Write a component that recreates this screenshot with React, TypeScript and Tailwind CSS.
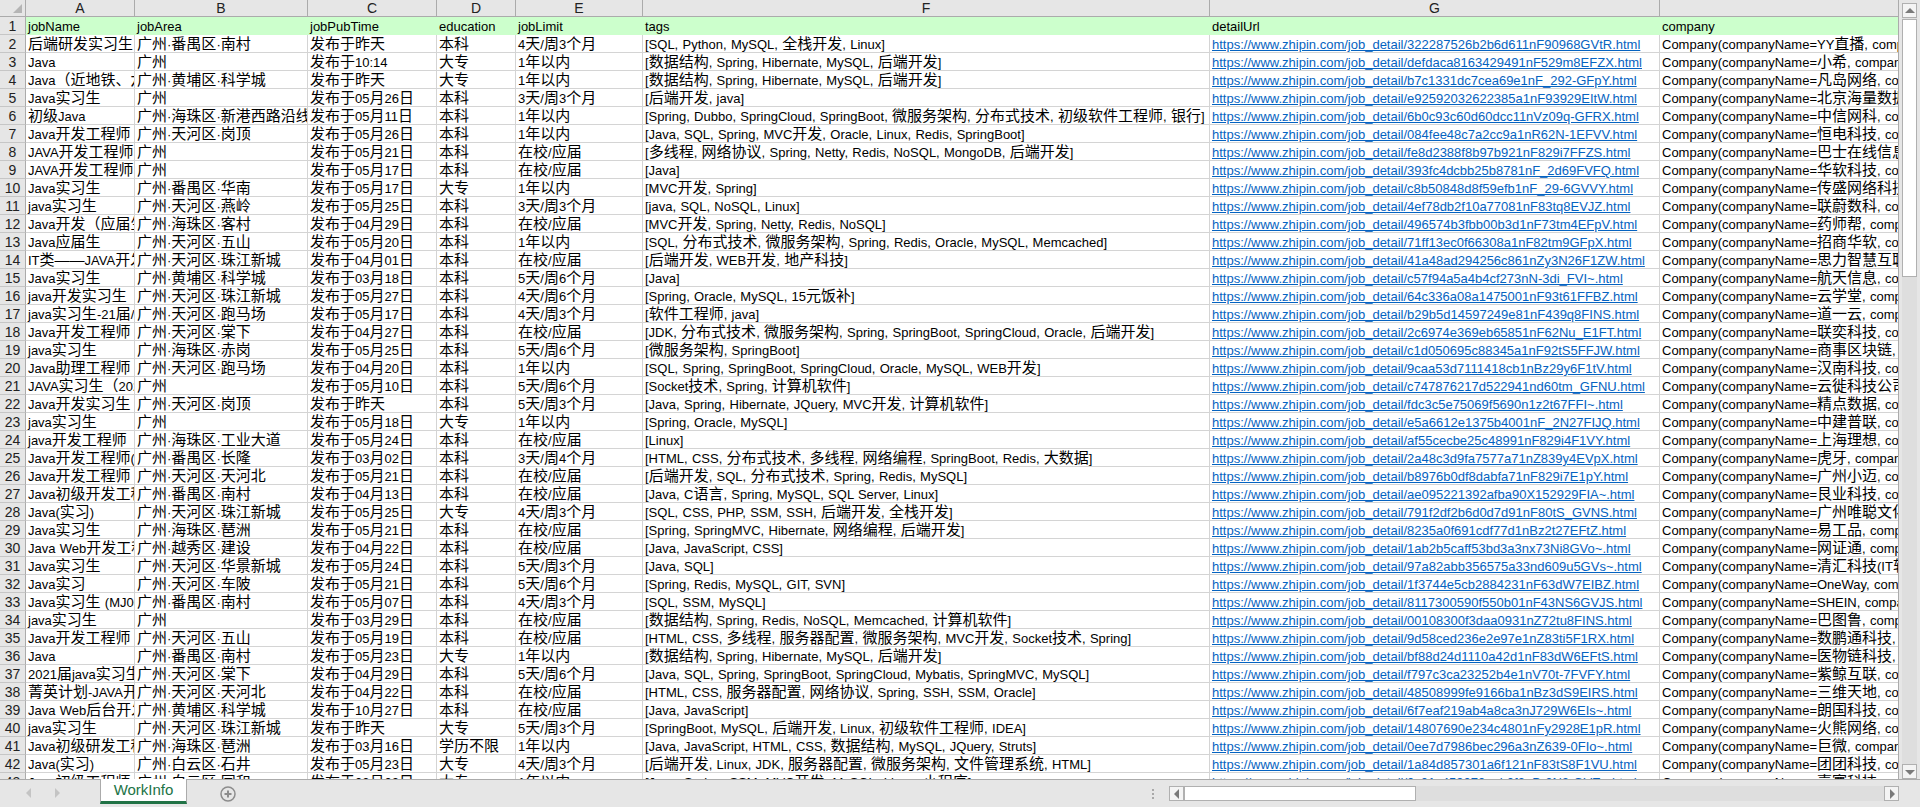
import React from "react";

const columns = [
  { label: "A", width: "w-[109px]" },
  { label: "B", width: "w-[173px]" },
  { label: "C", width: "w-[129px]" },
  { label: "D", width: "w-[79px]" },
  { label: "E", width: "w-[127px]" },
  { label: "F", width: "w-[567px]" },
  { label: "G", width: "w-[450px]" },
  { label: "", width: "w-[240px]" },
];

const widths = columns.map((c) => c.width);

const zp = "https://www.zhipin.com/job_detail/";
const co = "Company(companyName=";

const rows: string[][] = [
  ["后端研发实习生", "广州·番禺区·南村", "发布于昨天", "本科", "4天/周3个月", "[SQL, Python, MySQL, 全栈开发, Linux]", "322287526b2b6d611nF90968GVtR", "YY直播, company"],
  ["Java", "广州", "发布于10:14", "大专", "1年以内", "[数据结构, Spring, Hibernate, MySQL, 后端开发]", "defdaca8163429491nF529m8EFZX", "小希, company"],
  ["Java（近地铁、六", "广州·黄埔区·科学城", "发布于昨天", "大专", "1年以内", "[数据结构, Spring, Hibernate, MySQL, 后端开发]", "b7c1331dc7cea69e1nF_292-GFpY", "凡岛网络, company"],
  ["Java实习生", "广州", "发布于05月26日", "本科", "3天/周3个月", "[后端开发, java]", "e92592032622385a1nF93929EItW", "北京海量数据, company"],
  ["初级Java", "广州·海珠区·新港西路沿线", "发布于05月11日", "本科", "1年以内", "[Spring, Dubbo, SpringCloud, SpringBoot, 微服务架构, 分布式技术, 初级软件工程师, 银行]", "6b0c93c60d60dcc11nVz09q-GFRX", "中信网科, company"],
  ["Java开发工程师", "广州·天河区·岗顶", "发布于05月26日", "本科", "1年以内", "[Java, SQL, Spring, MVC开发, Oracle, Linux, Redis, SpringBoot]", "084fee48c7a2cc9a1nR62N-1EFVV", "恒电科技, company"],
  ["JAVA开发工程师（", "广州", "发布于05月21日", "本科", "在校/应届", "[多线程, 网络协议, Spring, Netty, Redis, NoSQL, MongoDB, 后端开发]", "fe8d2388f8b97b921nF829i7FFZS", "巴士在线信息, company"],
  ["JAVA开发工程师（", "广州", "发布于05月17日", "本科", "在校/应届", "[Java]", "393fc4dcbb25b8781nF_2d69FVFQ", "华软科技, company"],
  ["Java实习生", "广州·番禺区·华南", "发布于05月17日", "大专", "1年以内", "[MVC开发, Spring]", "c8b50848d8f59efb1nF_29-6GVVY", "传盛网络科技, company"],
  ["java实习生", "广州·天河区·燕岭", "发布于05月25日", "本科", "3天/周3个月", "[java, SQL, NoSQL, Linux]", "4ef78db2f10a77081nF83tq8EVJZ", "联蔚数科, company"],
  ["Java开发（应届生", "广州·海珠区·客村", "发布于04月29日", "本科", "在校/应届", "[MVC开发, Spring, Netty, Redis, NoSQL]", "496574b3fbb00b3d1nF73tm4EFpV", "药师帮, company"],
  ["Java应届生", "广州·天河区·五山", "发布于05月20日", "本科", "1年以内", "[SQL, 分布式技术, 微服务架构, Spring, Redis, Oracle, MySQL, Memcached]", "71ff13ec0f66308a1nF82tm9GFpX", "招商华软, company"],
  ["IT类——JAVA开发", "广州·天河区·珠江新城", "发布于04月01日", "本科", "在校/应届", "[后端开发, WEB开发, 地产科技]", "41a48ad294256c861nZy3N26F1ZW", "思力智慧互联, company"],
  ["Java实习生", "广州·黄埔区·科学城", "发布于03月18日", "本科", "5天/周6个月", "[Java]", "c57f94a5a4b4cf273nN-3di_FVI~", "航天信息, company"],
  ["java开发实习生", "广州·天河区·珠江新城", "发布于05月27日", "本科", "4天/周6个月", "[Spring, Oracle, MySQL, 15元饭补]", "64c336a08a1475001nF93t61FFBZ", "云学堂, company"],
  ["java实习生-21届/2", "广州·天河区·跑马场", "发布于05月17日", "本科", "4天/周3个月", "[软件工程师, java]", "b29b5d14597249e81nF439q8FINS", "道一云, company"],
  ["Java开发工程师", "广州·天河区·棠下", "发布于04月27日", "本科", "在校/应届", "[JDK, 分布式技术, 微服务架构, Spring, SpringBoot, SpringCloud, Oracle, 后端开发]", "2c6974e369eb65851nF62Nu_E1FT", "联奕科技, company"],
  ["java实习生", "广州·海珠区·赤岗", "发布于05月25日", "本科", "5天/周6个月", "[微服务架构, SpringBoot]", "c1d050695c88345a1nF92tS5FFJW", "商事区块链, company"],
  ["Java助理工程师", "广州·天河区·跑马场", "发布于04月20日", "本科", "1年以内", "[SQL, Spring, SpringBoot, SpringCloud, Oracle, MySQL, WEB开发]", "9caa53d7111418cb1nBz29y6F1tV", "汉南科技, company"],
  ["JAVA实习生（2021", "广州", "发布于05月10日", "本科", "5天/周6个月", "[Socket技术, Spring, 计算机软件]", "c747876217d522941nd60tm_GFNU", "云徙科技公司, company"],
  ["Java开发实习生", "广州·天河区·岗顶", "发布于昨天", "本科", "5天/周3个月", "[Java, Spring, Hibernate, JQuery, MVC开发, 计算机软件]", "fdc3c5e75069f5690n1z2t67FFI~", "精点数据, company"],
  ["java实习生", "广州", "发布于05月18日", "大专", "1年以内", "[Spring, Oracle, MySQL]", "e5a6612e1375b4001nF_2N27FIJQ", "中建普联, company"],
  ["java开发工程师", "广州·海珠区·工业大道", "发布于05月24日", "本科", "在校/应届", "[Linux]", "af55cecbe25c48991nF829i4F1VY", "上海理想, company"],
  ["Java开发工程师(3", "广州·番禺区·长隆", "发布于03月02日", "本科", "3天/周4个月", "[HTML, CSS, 分布式技术, 多线程, 网络编程, SpringBoot, Redis, 大数据]", "2a48c3d9fa7577a71nZ839y4EVpX", "虎牙, company"],
  ["Java开发工程师", "广州·天河区·天河北", "发布于05月21日", "本科", "在校/应届", "[后端开发, SQL, 分布式技术, Spring, Redis, MySQL]", "b8976b0df8dabfa71nF829i7E1pY", "广州小迈, company"],
  ["Java初级开发工程", "广州·番禺区·南村", "发布于04月13日", "本科", "在校/应届", "[Java, C语言, Spring, MySQL, SQL Server, Linux]", "ae095221392afba90X152929FIA~", "艮业科技, company"],
  ["Java(实习)", "广州·天河区·珠江新城", "发布于05月25日", "大专", "4天/周3个月", "[SQL, CSS, PHP, SSM, SSH, 后端开发, 全栈开发]", "791f2df2b6d0d7d91nF80tS_GVNS", "广州唯聪文化, company"],
  ["Java实习生", "广州·海珠区·琶洲", "发布于05月21日", "本科", "在校/应届", "[Spring, SpringMVC, Hibernate, 网络编程, 后端开发]", "8235a0f691cdf77d1nBz2t27EFtZ", "易工品, company"],
  ["Java Web开发工程", "广州·越秀区·建设", "发布于04月22日", "本科", "在校/应届", "[Java, JavaScript, CSS]", "1ab2b5caff53bd3a3nx73Ni8GVo~", "网证通, company"],
  ["Java实习生", "广州·天河区·华景新城", "发布于05月24日", "本科", "5天/周3个月", "[Java, SQL]", "97a82abb356575a33nd609u5GVs~", "清汇科技(IT软件, company"],
  ["Java实习", "广州·天河区·车陂", "发布于05月21日", "本科", "5天/周6个月", "[Spring, Redis, MySQL, GIT, SVN]", "1f3744e5cb2884231nF63dW7EIBZ", "OneWay, company"],
  ["Java实习生 (MJ00", "广州·番禺区·南村", "发布于05月07日", "本科", "4天/周3个月", "[SQL, SSM, MySQL]", "8117300590f550b01nF43NS6GVJS", "SHEIN, company"],
  ["java实习生", "广州", "发布于03月29日", "本科", "在校/应届", "[数据结构, Spring, Redis, NoSQL, Memcached, 计算机软件]", "00108300f3daa0931nZ72tu8FINS", "巴图鲁, company"],
  ["Java开发工程师", "广州·天河区·五山", "发布于05月19日", "本科", "在校/应届", "[HTML, CSS, 多线程, 服务器配置, 微服务架构, MVC开发, Socket技术, Spring]", "9d58ced236e2e97e1nZ83ti5F1RX", "数鹏通科技, company"],
  ["Java", "广州·番禺区·南村", "发布于05月23日", "大专", "1年以内", "[数据结构, Spring, Hibernate, MySQL, 后端开发]", "bf88d24d1110a42d1nF83dW6EFtS", "医物链科技, company"],
  ["2021届java实习生", "广州·天河区·棠下", "发布于04月29日", "本科", "5天/周6个月", "[Java, SQL, Spring, SpringBoot, SpringCloud, Mybatis, SpringMVC, MySQL]", "f797c3ca23252b4e1nV70t-7FVFY", "紫鲸互联, company"],
  ["菁英计划-JAVA开发", "广州·天河区·天河北", "发布于04月22日", "本科", "在校/应届", "[HTML, CSS, 服务器配置, 网络协议, Spring, SSH, SSM, Oracle]", "48508999fe9166ba1nBz3dS9EIRS", "三维天地, company"],
  ["Java Web后台开发", "广州·黄埔区·科学城", "发布于10月27日", "本科", "在校/应届", "[Java, JavaScript]", "6f7eaf219ab4a8ca3nJ729W6EIs~", "朗国科技, company"],
  ["java实习生", "广州·天河区·珠江新城", "发布于昨天", "大专", "5天/周3个月", "[SpringBoot, MySQL, 后端开发, Linux, 初级软件工程师, IDEA]", "14807690e234c4801nFy2928E1pR", "火熊网络, company"],
  ["Java初级研发工程", "广州·海珠区·琶洲", "发布于03月16日", "学历不限", "1年以内", "[Java, JavaScript, HTML, CSS, 数据结构, MySQL, JQuery, Struts]", "0ee7d7986bec296a3nZ639-0FIo~", "巨微, company"],
  ["Java(实习)", "广州·白云区·石井", "发布于05月23日", "大专", "4天/周3个月", "[后端开发, Linux, JDK, 服务器配置, 微服务架构, 文件管理系统, HTML]", "1a84d857301a6f121nF83tS8F1VU", "团团科技, company"],
  ["Java初级工程师", "广州·白云区·同和", "发布于03月02日", "大专", "1年以内", "[Java, Spring, SSM, MVC开发, MySQL, Linux, 小程序]", "0c01c459070aeb0f3nB-2N2-GVE~", "壹寰科技, company"],
];

// Latin runs are set smaller than CJK runs, the sheet font is narrow.
// leading-[0] keeps the CJK run from pushing the baseline down.
function Mixed({ text }: { text: string }) {
  const parts = text.split(/([\u3000-\u9fff\uff00-\uffef—]+)/);
  return (
    <>
      {parts.map((p, i) =>
        i % 2 === 1 ? (
          <span key={i} className="text-[15px] leading-[0]">
            {p}
          </span>
        ) : (
          <span key={i}>{p}</span>
        ),
      )}
    </>
  );
}

function Cell({ width, children, className = "" }: { width: string; children?: React.ReactNode; className?: string }) {
  return (
    <div className={`${width} h-[18px] shrink-0 overflow-hidden whitespace-nowrap border-r border-b pt-px pl-[2px] leading-[17px] [word-spacing:0.7px] ${className}`}>
      {children}
    </div>
  );
}

function RowNumber({ n }: { n: number }) {
  return (
    <div className="h-[18px] w-[26px] shrink-0 border-r border-b border-r-[#ababab] border-b-[#c6c6c6] bg-[#e6e6e6] text-center text-[14px] leading-[18px] text-[#222]">
      {n}
    </div>
  );
}

const HeaderRow = () => {
  const names = ["jobName", "jobArea", "jobPubTime", "education", "jobLimit", "tags", "detailUrl", "company"];
  return (
    <div className="flex">
      <RowNumber n={1} />
      {names.map((n, i) => (
        <Cell key={n} width={widths[i]} className="border-[#ccffcc] bg-[#ccffcc]">
          {n}
        </Cell>
      ))}
    </div>
  );
};

function SheetRow({ row, n }: { row: string[]; n: number }) {
  return (
    <div className="flex">
      <RowNumber n={n} />
      {row.map((v, i) =>
        i === 6 ? (
          <Cell key={i} width={widths[i]} className="border-[#d4d4d4]">
            <span className="text-[#0563c1] underline">{zp + v + ".html"}</span>
          </Cell>
        ) : (
          <Cell key={i} width={widths[i]} className="border-[#d4d4d4]">
            <Mixed text={i === 7 ? co + v : v} />
          </Cell>
        ),
      )}
    </div>
  );
}

const ColumnHeaders = () => (
  <div className="flex h-[17px] border-b border-[#ababab] bg-[#e6e6e6]">
    <div className="flex w-[26px] shrink-0 items-end justify-end border-r border-[#ababab] pr-[3px] pb-[3px]">
      <svg width="9" height="9">
        <polygon points="9,0 9,9 0,9" fill="#b5b5b5" />
      </svg>
    </div>
    {columns.map((c, i) => (
      <div key={i} className={`${c.width} shrink-0 border-r border-[#ababab] text-center text-[14px] leading-[16px] text-[#222]`}>
        {c.label}
      </div>
    ))}
  </div>
);

function ScrollButton({ dir }: { dir: "up" | "down" | "left" | "right" }) {
  const points = { up: "0,7 5,2 10,7", down: "0,3 5,8 10,3", left: "7,0 2,5 7,10", right: "3,0 8,5 3,10" }[dir];
  return (
    <div className="flex h-[15px] w-[15px] shrink-0 items-center justify-center border border-[#b0b0b0] bg-[#f4f4f4]">
      <svg width="10" height="10" viewBox="0 0 10 10">
        <polygon points={points} fill="#7a7a7a" />
      </svg>
    </div>
  );
}

const VerticalScrollbar = () => (
  <div className="flex w-[22px] flex-col items-center border-l border-[#ababab] bg-[#e6e6e6] pt-[3px] pb-0">
    <ScrollButton dir="up" />
    <div className="flex h-[749px] w-[15px] flex-col bg-[#dedede]">
      <div className="mt-px h-[258px] border border-[#b0b0b0] bg-white" />
    </div>
    <ScrollButton dir="down" />
  </div>
);

const SheetTabs = () => (
  <div className="flex items-start">
    <div className="flex h-[26px] w-[100px] items-center pl-[26px]">
      <svg width="6" height="10">
        <polygon points="5,0 0,5 5,10" fill="#c4c4c4" />
      </svg>
      <svg width="6" height="10" className="ml-[23px]">
        <polygon points="0,0 5,5 0,10" fill="#c4c4c4" />
      </svg>
    </div>
    <div className="-mt-px flex h-[25px] w-[87px] items-center justify-center border-x border-b-[3px] border-x-[#ababab] border-b-[#217346] bg-white pt-[1px] text-[15px] text-[#217346]">
      WorkInfo
    </div>
    <div className="mt-[6px] ml-[33px]">
      <svg width="16" height="16" viewBox="0 0 16 16">
        <circle cx="8" cy="8" r="7" fill="none" stroke="#8c8c8c" strokeWidth="1.5" />
        <path d="M8 4.5v7M4.5 8h7" stroke="#8c8c8c" strokeWidth="2" />
      </svg>
    </div>
  </div>
);

const HorizontalScrollbar = () => (
  <div className="mt-[6px] flex items-start">
    <div className="mr-[15px] flex h-[15px] flex-col justify-center gap-[2px]">
      <div className="h-[2px] w-[2px] bg-[#a8a8a8]" />
      <div className="h-[2px] w-[2px] bg-[#a8a8a8]" />
      <div className="h-[2px] w-[2px] bg-[#a8a8a8]" />
    </div>
    <ScrollButton dir="left" />
    <div className="flex h-[15px] w-[700px] bg-[#dedede]">
      <div className="h-full w-[232px] border border-[#b0b0b0] bg-white" />
    </div>
    <ScrollButton dir="right" />
  </div>
);

export default function App() {
  return (
    <div className="flex h-[807px] w-[1920px] flex-col overflow-hidden bg-[#e6e6e6] font-['Liberation_Sans','Noto_Sans_CJK_SC',sans-serif] text-[13px] text-black">
      <div className="flex h-[779px]">
        <div className="w-[1898px] overflow-hidden bg-white">
          <ColumnHeaders />
          <HeaderRow />
          {rows.map((r, i) => (
            <SheetRow key={i} row={r} n={i + 2} />
          ))}
        </div>
        <VerticalScrollbar />
      </div>
      <div className="flex h-[28px] items-start justify-between border-t border-[#ababab] pr-[21px]">
        <SheetTabs />
        <HorizontalScrollbar />
      </div>
    </div>
  );
}
